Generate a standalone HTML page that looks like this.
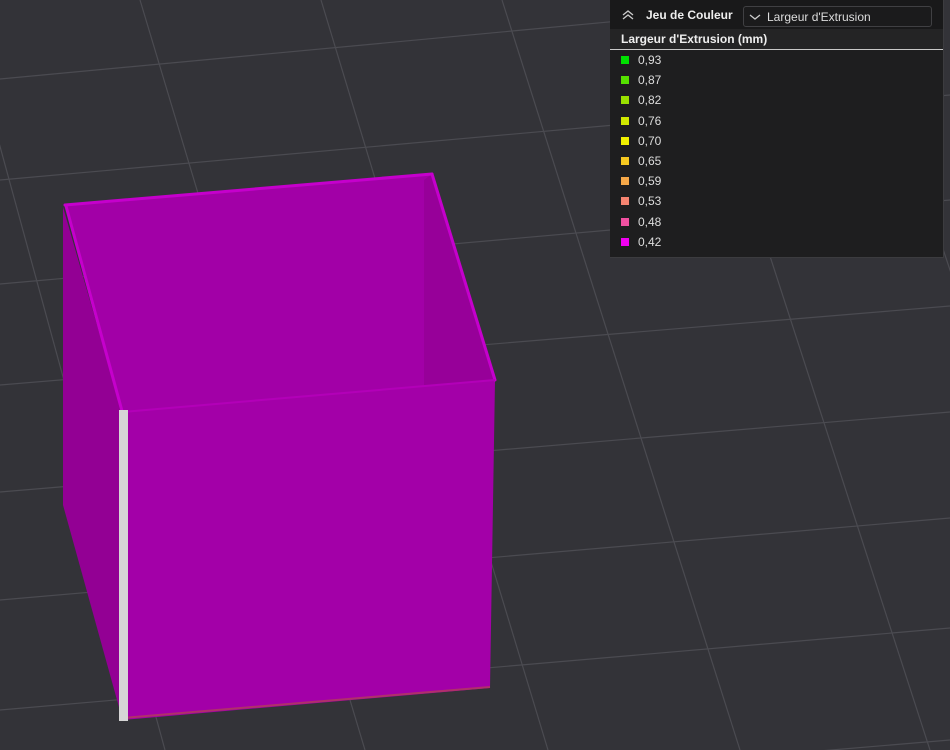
<!DOCTYPE html>
<html><head><meta charset="utf-8"><style>
html,body{margin:0;padding:0;width:950px;height:750px;overflow:hidden;background:#333338;font-family:"Liberation Sans",sans-serif}
#panel{position:absolute;left:610px;top:0;width:333px;height:257px;background:#1e1e1f;border-right:1px solid #3c3c3f;border-bottom:1px solid #3c3c3f;overflow:hidden}
.hdr{height:29px;background:#19191a;position:relative}
.hdr .t{position:absolute;left:36px;top:8px;color:#eee;font-weight:bold;font-size:12px}
.dd{position:absolute;left:133px;top:6px;width:187px;height:19px;border:1px solid #404043;border-radius:3px;background:#1b1b1c;color:#ddd;font-size:12px}
.dd span{position:absolute;left:23px;top:3px}
.sub{height:20px;background:#242425;border-bottom:1px solid #c8c8c8;color:#eee;font-weight:bold;font-size:12px;padding-left:11px;line-height:20px}
.row{height:20.2px;position:relative;color:#ddd;font-size:12px}
.row i{position:absolute;left:11px;top:5px;width:8px;height:8px}
.row span{position:absolute;left:28px;top:2px}
</style></head><body>
<svg width="950" height="750" viewBox="0 0 950 750" style="position:absolute;left:0;top:0;overflow:hidden">
<g stroke="#4b4b51" stroke-width="1.2" fill="none">
<line x1="0" y1="79" x2="950" y2="-10"/>
<line x1="0" y1="180" x2="950" y2="95"/>
<line x1="0" y1="284" x2="950" y2="200"/>
<line x1="0" y1="385" x2="950" y2="306"/>
<line x1="0" y1="492" x2="950" y2="412"/>
<line x1="0" y1="600" x2="950" y2="518"/>
<line x1="0" y1="710" x2="950" y2="628"/>
<line x1="0" y1="820" x2="950" y2="740"/>
<line x1="-40" y1="0" x2="165" y2="750"/>
<line x1="140" y1="0" x2="365" y2="750"/>
<line x1="321" y1="0" x2="548" y2="750"/>
<line x1="502" y1="0" x2="740" y2="750"/>
<line x1="687" y1="0" x2="930" y2="750"/>
<line x1="860" y1="0" x2="1110" y2="750"/>
</g>
<polygon points="63,207 122,412 122,718 63,505" fill="#930094"/>
<polygon points="65,205 432,174 495,380 122,412" fill="#a200a7"/>
<polygon points="424,180 432,174 495,380 424,386" fill="#970099"/>
<polygon points="122,412 495,380 490,688 122,720" fill="#a300a8"/>
<line x1="122" y1="718" x2="490" y2="687" stroke="#b0306a" stroke-width="2"/>
<g stroke="#c500cc" stroke-width="3" stroke-linecap="round">
<line x1="65" y1="205" x2="432" y2="174"/>
<line x1="432" y1="174" x2="495" y2="380"/>
<line x1="66" y1="206" x2="122" y2="411"/>
</g>
<line x1="122" y1="412" x2="495" y2="380" stroke="#b300b8" stroke-width="2"/>
<rect x="119" y="410" width="9" height="311" fill="#d6d6d6"/>
</svg>
<div id="panel">
<div class="hdr">
<svg width="14" height="12" style="position:absolute;left:11px;top:9px"><path d="M2 6 L7 2 L12 6 M2 10 L7 6 L12 10" stroke="#ccc" stroke-width="1.3" fill="none"/></svg>
<div class="t">Jeu de Couleur</div>
<div class="dd"><svg width="12" height="8" style="position:absolute;left:5px;top:7px"><path d="M1 1 L6 5 L11 1" stroke="#ccc" stroke-width="1.3" fill="none"/></svg><span>Largeur d'Extrusion</span></div>
</div>
<div class="sub">Largeur d'Extrusion (mm)</div>
<div style="height:1px"></div>
<div class="row"><i style="background:#00e000"></i><span>0,93</span></div>
<div class="row"><i style="background:#55e000"></i><span>0,87</span></div>
<div class="row"><i style="background:#99e000"></i><span>0,82</span></div>
<div class="row"><i style="background:#d0e800"></i><span>0,76</span></div>
<div class="row"><i style="background:#f0f000"></i><span>0,70</span></div>
<div class="row"><i style="background:#f5c820"></i><span>0,65</span></div>
<div class="row"><i style="background:#f5a848"></i><span>0,59</span></div>
<div class="row"><i style="background:#f58470"></i><span>0,53</span></div>
<div class="row"><i style="background:#f050a0"></i><span>0,48</span></div>
<div class="row"><i style="background:#f000f0"></i><span>0,42</span></div>
</div>
</body></html>
